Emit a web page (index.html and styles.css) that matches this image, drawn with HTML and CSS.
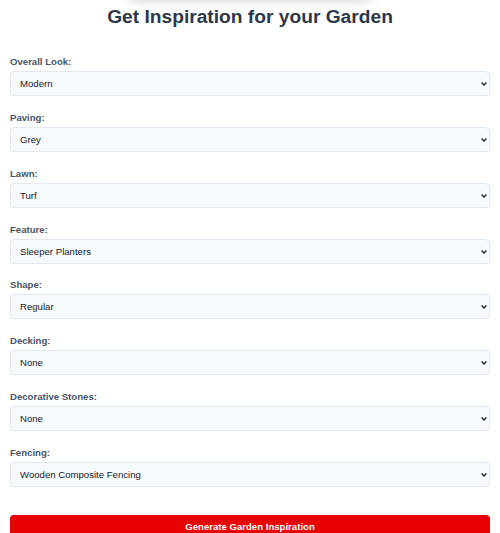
FILE: index.html
```html
<!DOCTYPE html>
<html lang="en">
<head>
<meta charset="utf-8">
<title>Get Inspiration for your Garden</title>
<link rel="stylesheet" href="styles.css">
</head>
<body>
<div class="top-shadow"></div>
<main class="page">
  <h1 class="title">Get Inspiration for your Garden</h1>
  <form class="form">
    <div class="field">
      <label class="label" for="look">Overall Look:</label>
      <div class="select-wrap">
        <select class="select" id="look"><option>Modern</option></select>
        <svg class="chevron" width="6" height="4" viewBox="0 0 6 4"><path d="M0.6 0.6 L3 3 L5.4 0.6" fill="none" stroke="#1f2937" stroke-width="1.4"/></svg>
      </div>
    </div>
    <div class="field">
      <label class="label" for="paving">Paving:</label>
      <div class="select-wrap">
        <select class="select" id="paving"><option>Grey</option></select>
        <svg class="chevron" width="6" height="4" viewBox="0 0 6 4"><path d="M0.6 0.6 L3 3 L5.4 0.6" fill="none" stroke="#1f2937" stroke-width="1.4"/></svg>
      </div>
    </div>
    <div class="field">
      <label class="label" for="lawn">Lawn:</label>
      <div class="select-wrap">
        <select class="select" id="lawn"><option>Turf</option></select>
        <svg class="chevron" width="6" height="4" viewBox="0 0 6 4"><path d="M0.6 0.6 L3 3 L5.4 0.6" fill="none" stroke="#1f2937" stroke-width="1.4"/></svg>
      </div>
    </div>
    <div class="field">
      <label class="label" for="feature">Feature:</label>
      <div class="select-wrap">
        <select class="select" id="feature"><option>Sleeper Planters</option></select>
        <svg class="chevron" width="6" height="4" viewBox="0 0 6 4"><path d="M0.6 0.6 L3 3 L5.4 0.6" fill="none" stroke="#1f2937" stroke-width="1.4"/></svg>
      </div>
    </div>
    <div class="field">
      <label class="label" for="shape">Shape:</label>
      <div class="select-wrap">
        <select class="select" id="shape"><option>Regular</option></select>
        <svg class="chevron" width="6" height="4" viewBox="0 0 6 4"><path d="M0.6 0.6 L3 3 L5.4 0.6" fill="none" stroke="#1f2937" stroke-width="1.4"/></svg>
      </div>
    </div>
    <div class="field">
      <label class="label" for="decking">Decking:</label>
      <div class="select-wrap">
        <select class="select" id="decking"><option>None</option></select>
        <svg class="chevron" width="6" height="4" viewBox="0 0 6 4"><path d="M0.6 0.6 L3 3 L5.4 0.6" fill="none" stroke="#1f2937" stroke-width="1.4"/></svg>
      </div>
    </div>
    <div class="field">
      <label class="label" for="stones">Decorative Stones:</label>
      <div class="select-wrap">
        <select class="select" id="stones"><option>None</option></select>
        <svg class="chevron" width="6" height="4" viewBox="0 0 6 4"><path d="M0.6 0.6 L3 3 L5.4 0.6" fill="none" stroke="#1f2937" stroke-width="1.4"/></svg>
      </div>
    </div>
    <div class="field">
      <label class="label" for="fencing">Fencing:</label>
      <div class="select-wrap">
        <select class="select" id="fencing"><option>Wooden Composite Fencing</option></select>
        <svg class="chevron" width="6" height="4" viewBox="0 0 6 4"><path d="M0.6 0.6 L3 3 L5.4 0.6" fill="none" stroke="#1f2937" stroke-width="1.4"/></svg>
      </div>
    </div>
    <button class="button" type="button">Generate Garden Inspiration</button>
  </form>
</main>
</body>
</html>
```
FILE: styles.css
```css
html, body {
  margin: 0;
  padding: 0;
  background: #ffffff;
}
body {
  font-family: "Liberation Sans", Arial, sans-serif;
  position: relative;
  overflow: hidden;
}
.top-shadow {
  position: absolute;
  top: -30px;
  left: 125px;
  width: 250px;
  height: 30px;
  border-radius: 12px;
  background: #ffffff;
  box-shadow: 0 2px 10px rgba(0, 0, 0, 0.14);
}
.page {
  padding: 6px 10px 0;
}
.title {
  margin: 0 0 28px;
  font-size: 19.2px;
  line-height: 22px;
  font-weight: 700;
  text-align: center;
  color: #2d3748;
}
.form {
  display: flex;
  flex-direction: column;
}
.field {
  display: flex;
  flex-direction: column;
  margin-bottom: 15.85px;
}
.label {
  font-size: 9.6px;
  line-height: 11px;
  font-weight: 700;
  color: #4a5568;
  margin-bottom: 4px;
}
.select-wrap {
  position: relative;
}
.select {
  display: block;
  -webkit-appearance: none;
  appearance: none;
  height: 25px;
  width: 100%;
  box-sizing: border-box;
  border: 1px solid #e2e8f0;
  border-radius: 4px;
  background-color: #f7fafc;
  color: #1a202c;
  font-family: "Liberation Sans", Arial, sans-serif;
  font-size: 9.6px;
  padding: 0 9px;
}
.chevron {
  position: absolute;
  right: 3px;
  top: 11px;
  pointer-events: none;
}
.button {
  margin-top: 12.5px;
  height: 23px;
  width: 100%;
  border: none;
  border-radius: 4px;
  background: #e60000;
  color: #ffffff;
  font-family: "Liberation Sans", Arial, sans-serif;
  font-size: 9.6px;
  font-weight: 700;
  padding: 0;
}
```
